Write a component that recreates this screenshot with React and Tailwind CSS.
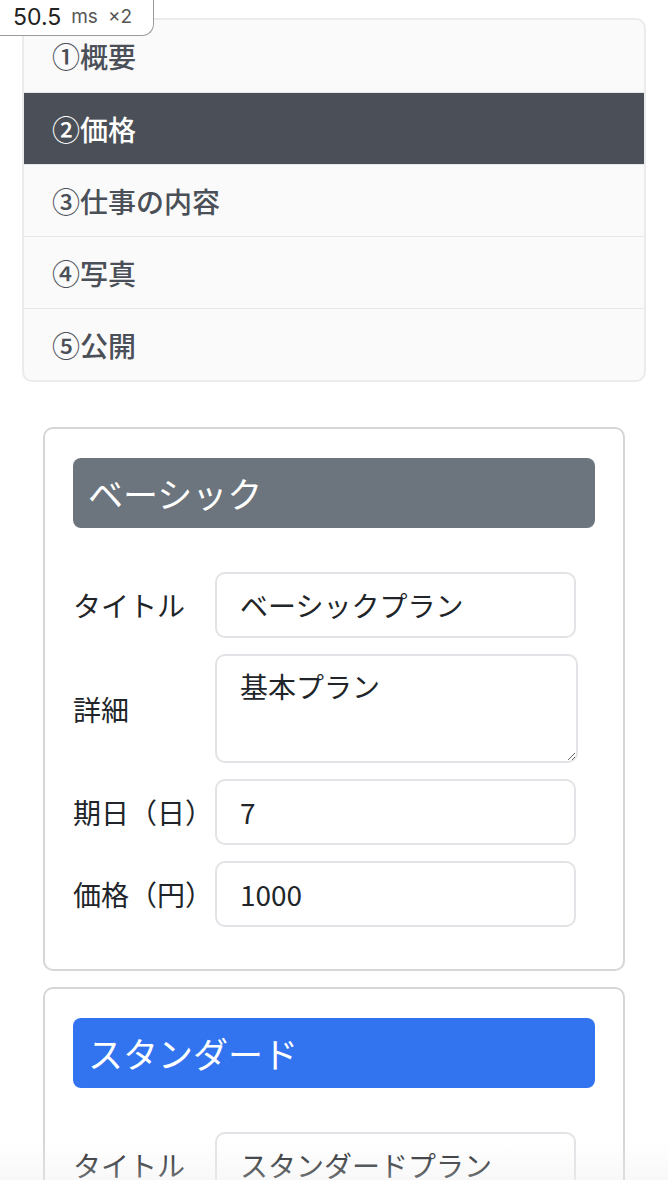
import React from 'react';

const steps = ['①概要', '②価格', '③仕事の内容', '④写真', '⑤公開'];

const plans = [
  { name: 'ベーシック', color: 'bg-[#6c757d]', title: 'ベーシックプラン', detail: '基本プラン', days: '7', price: '1000' },
  { name: 'スタンダード', color: 'bg-[#3274f0]', title: 'スタンダードプラン', detail: '標準プラン', days: '14', price: '3000' },
];

const Field = ({ label, children }) => (
  <div className="flex items-center">
    <div className="w-[142px] shrink-0 text-[28px] text-[#212529]">{label}</div>
    {children}
  </div>
);

const inputCls =
  'w-[361px] h-[66px] border-2 border-[#e2e3e6] rounded-[10px] px-[23px] text-[28px] text-[#212529] bg-white outline-none';

const PlanCard = ({ plan }) => (
  <div className="border-2 border-[#d6d6d6] rounded-[10px] px-[28px] pt-[29px] pb-[42px] bg-white">
    <div className={`${plan.color} h-[70px] rounded-[8px] px-[15px] flex items-center text-[35px] text-white`}>
      {plan.name}
    </div>
    <div className="mt-[44px] flex flex-col gap-[16px]">
      <Field label="タイトル">
        <input className={inputCls} defaultValue={plan.title} />
      </Field>
      <Field label="詳細">
        <textarea
          className="w-[363px] h-[109px] border-2 border-[#e2e3e6] rounded-[10px] px-[23px] pt-[10px] text-[28px] leading-[40px] text-[#212529] bg-white outline-none"
          defaultValue={plan.detail}
        />
      </Field>
      <Field label="期日（日）">
        <input className={inputCls} defaultValue={plan.days} />
      </Field>
      <Field label="価格（円）">
        <input className={inputCls} defaultValue={plan.price} />
      </Field>
    </div>
  </div>
);

export default function App() {
  return (
    <div
      className="relative min-h-screen bg-white pb-[40px]"
      style={{ fontFamily: '"Noto Sans CJK JP", "Noto Sans", sans-serif' }}
    >
      {/* timing badge */}
      <div className="absolute top-0 left-0 z-10 h-[36px] w-[154px] bg-white border-r-[1.5px] border-b-[1.5px] border-[#9a9a9a] rounded-br-[12px] flex items-center pl-[13px] gap-[10px] font-['Inter',sans-serif]">
        <span className="text-[#222] text-[23px]">50.5</span>
        <span className="text-[#555] text-[19px]">ms</span>
        <span className="text-[#555] text-[19px]">×2</span>
      </div>

      {/* steps */}
      <div className="px-[22px] pt-[18px]">
        <ul className="border-2 border-[#ebebed] rounded-[10px] overflow-hidden bg-[#fafafa]">
          {steps.map((s, i) => (
            <li
              key={s}
              className={`h-[72px] flex items-center pl-[28px] text-[28px] font-medium ${
                i > 0 ? 'border-t border-[#e6e6e8]' : ''
              } ${i === 1 ? 'bg-[#4b5058] text-white border-[#4b5058]' : 'text-[#4b5058]'}`}
            >
              {s}
            </li>
          ))}
        </ul>
      </div>

      {/* plans */}
      <div className="px-[43px] mt-[45px] flex flex-col gap-[16px]">
        {plans.map((p) => (
          <PlanCard key={p.name} plan={p} />
        ))}
      </div>

      {/* bottom fade */}
      <div className="fixed bottom-0 left-0 right-0 h-[40px] bg-gradient-to-b from-transparent to-[#eeeeee]/40 pointer-events-none" />
    </div>
  );
}
